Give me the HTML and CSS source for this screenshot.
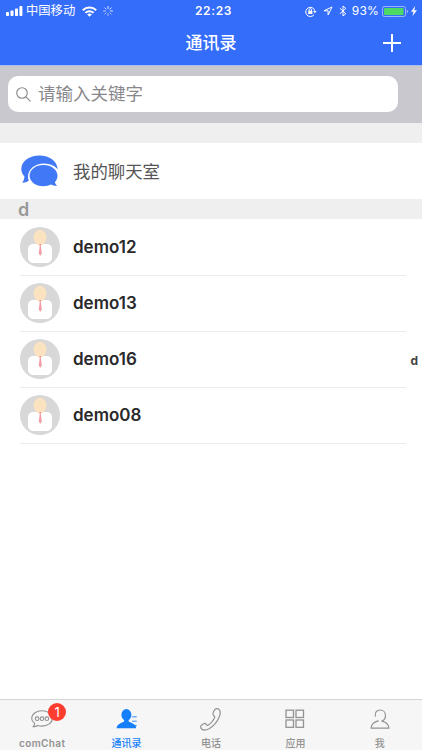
FILE: index.html
```
<!DOCTYPE html>
<html lang="zh-CN">
<head>
  <meta charset="UTF-8" />
  <meta name="viewport" content="width=device-width, initial-scale=1.0"/>
  <title>通讯录</title>
  <link rel="stylesheet" href="styles.css">
</head>
<body>
  <!-- Header -->
  <header>
    <div class="status-bar">
      <div class="status-left">
        <svg class="signal" width="17" height="10" viewBox="0 0 17 10" fill="#fff">
          <rect x="0" y="6" width="3" height="4" rx="0.8"/>
          <rect x="4.5" y="4.5" width="3" height="5.5" rx="0.8"/>
          <rect x="9" y="2.5" width="3" height="7.5" rx="0.8"/>
          <rect x="13.4" y="0" width="3" height="10" rx="0.8"/>
        </svg>
        <span class="carrier">中国移动</span>
        <svg class="wifi" width="15" height="11" viewBox="0 0 15 11" fill="none" stroke="#fff" stroke-width="2">
          <path d="M0.8 4.2a9.6 9.6 0 0 1 13.4 0M3.4 6.9a5.9 5.9 0 0 1 8.2 0"/>
          <path d="M7.5 10.8L5.2 8.6a3.4 3.4 0 0 1 4.6 0z" fill="#fff" stroke="none"/>
        </svg>
        <svg class="spinner" width="10" height="10" viewBox="0 0 10 10" stroke="#fff" stroke-width="0.9" stroke-linecap="round">
          <path d="M5 0.5v2M8.2 1.8L6.8 3.2M9.5 5h-2" opacity="0.95"/>
          <path d="M8.2 8.2L6.8 6.8M5 9.5v-2M1.8 8.2l1.4-1.4" opacity="0.6"/>
          <path d="M0.5 5h2M1.8 1.8l1.4 1.4" opacity="0.75"/>
        </svg>
      </div>
      <span class="time">22:23</span>
      <div class="status-right">
        <svg class="lock" width="12" height="11" viewBox="0 0 12 11" fill="none" stroke="#fff">
          <path d="M9 8.7A4.6 4.6 0 1 1 9.8 4.8"/>
          <path d="M8.1 4.9h3.5L9.9 7.2z" fill="#fff" stroke="none"/>
          <path d="M4.1 5V3.8a1.2 1.2 0 0 1 2.4 0V5"/>
          <rect x="3.2" y="4.8" width="4.2" height="3.2" fill="#fff" stroke="none"/>
        </svg>
        <svg class="location" width="10" height="10" viewBox="0 0 10 10" fill="none" stroke="#fff" stroke-linejoin="round">
          <path d="M9 1L0.9 4.8h4.2V9z"/>
        </svg>
        <svg class="bluetooth" width="8" height="12" viewBox="0 0 8 12" fill="none" stroke="#fff">
          <path d="M0.8 3.2l6 5.4L4 11V1l2.8 2.4-6 5.4"/>
        </svg>
        <span class="percent">93%</span>
        <svg class="battery" width="27" height="11" viewBox="0 0 27 11">
          <rect x="0.5" y="0.5" width="23" height="10" rx="1.8" fill="none" stroke="#b4c8ff" stroke-width="0.8"/>
          <rect x="2" y="2" width="19.5" height="7" rx="0.4" fill="#4cd964"/>
          <path d="M24.8 3.8c1.5 0.5 1.5 2.9 0 3.4z" fill="#b4c8ff"/>
        </svg>
        <svg class="bolt" width="6" height="10" viewBox="0 0 6 10" fill="#fff">
          <path d="M4.2 0L0 5.7h2.5L1.5 10 6 4.2H3.3z"/>
        </svg>
      </div>
    </div>
    <div class="nav-bar">
      <h1>通讯录</h1>
      <svg class="add" width="18" height="18" viewBox="0 0 18 18" stroke="#fff" stroke-width="2">
        <path d="M9 0v18M0 9h18"/>
      </svg>
    </div>
  </header>

  <!-- Search -->
  <div class="search-bar">
    <div class="search-field">
      <svg width="15" height="15" viewBox="0 0 15 15" fill="none" stroke="#88888c" stroke-width="1.1">
        <circle cx="6" cy="6" r="5.3"/>
        <path d="M9.8 9.8l4.7 4.6"/>
      </svg>
      <span>请输入关键字</span>
    </div>
  </div>

  <!-- Contacts -->
  <main>
    <div class="chat-room">
      <svg width="38" height="32" viewBox="0 0 38 32" fill="#4078f6">
        <path d="M18.5 0.5C28.5 0.5 36 6 36.7 14.2 33.5 10.5 29 8.4 23.2 8.4 14 8.4 7 14 7 21.5c0 1.5 0.3 3 0.8 4.2C6 27 3.6 27.8 1.3 27.7 2.6 26 3.4 23.8 3.4 21.6 1.4 19.3 0.3 16.6 0.3 13.7 0.3 6.3 8.5 0.5 18.5 0.5z"/>
        <path d="M22.4 10c8 0 14.1 4.8 14.1 10.7 0 2.4-1 4.6-2.6 6.4 0.2 1.4 1 2.8 2.2 3.8-2.2 0.1-4.4-0.5-6.2-1.4-2.2 1.1-4.8 1.7-7.5 1.7C14.5 31.2 8.6 26.5 8.6 20.7 8.6 14.8 14.5 10 22.4 10z"/>
      </svg>
      <span>我的聊天室</span>
    </div>
    <div class="section-title">d</div>
    <ul class="contacts">
      <li>
        <svg class="avatar" viewBox="0 0 40 40"><use href="#person"/></svg>
        <span>demo12</span>
      </li>
      <li>
        <svg class="avatar" viewBox="0 0 40 40"><use href="#person"/></svg>
        <span>demo13</span>
      </li>
      <li>
        <svg class="avatar" viewBox="0 0 40 40"><use href="#person"/></svg>
        <span>demo16</span>
      </li>
      <li>
        <svg class="avatar" viewBox="0 0 40 40"><use href="#person"/></svg>
        <span>demo08</span>
      </li>
    </ul>
  </main>

  <div class="letter-index">d</div>

  <!-- Tab Bar -->
  <footer>
    <div class="tab">
      <div class="icon">
        <svg width="22" height="18" viewBox="0 0 22 18" fill="none" stroke="#929292" stroke-width="1.1">
          <path d="M3.6 13.2C1.8 12 0.7 10.4 0.7 8.4 0.7 4.1 5.3 0.8 11 0.8s10.3 3.3 10.3 7.6-4.6 7.7-10.3 7.7c-1.5 0-2.9-0.2-4.1-0.6C5.5 16.3 3.8 16.7 2.3 16.6 3.2 15.7 3.7 14.5 3.6 13.2z"/>
          <circle cx="6.1" cy="8.7" r="1.8"/>
          <circle cx="11" cy="8.7" r="1.8"/>
          <circle cx="15.9" cy="8.7" r="1.8"/>
        </svg>
        <span class="badge">1</span>
      </div>
      <span class="latin">comChat</span>
    </div>
    <div class="tab active">
      <div class="icon">
        <svg width="22" height="20" viewBox="0 0 22 20" fill="#147efb">
          <ellipse cx="10.4" cy="5.9" rx="5" ry="5.8"/>
          <path d="M8.2 9h4.4v3.3c1.2 1.3 7 2.3 7.7 6.9H0.5c0.7-4.6 6.5-5.6 7.7-6.9z"/>
          <path d="M16.2 7.8h4.5M16.2 12.2h4.5M18.2 16.6h2.5" stroke="#147efb" stroke-width="0.9"/>
        </svg>
      </div>
      <span>通讯录</span>
    </div>
    <div class="tab">
      <div class="icon">
        <svg width="22" height="23" viewBox="0 0 22 23" fill="none" stroke="#929292" stroke-width="1.2" stroke-linejoin="round">
          <path d="M14.6 1.8C16 0.5 18 0.5 19.2 1.7c1.4 1.6 1.2 5-0.5 8.5-2 4-5.6 8.2-9.6 10.5-3.2 1.7-6 1.7-7.5 0.3-1.3-1.3-1.2-3.2 0.2-4.1l1.8-1.1c1-0.6 2-0.3 2.6 0.5l0.5 0.7c0.5 0.5 1.2 0.4 1.8 0 2.7-1.8 4.7-4.2 6-7 0.4-0.9 0.2-1.5-0.4-2-0.9-0.7-1.3-1.4-1.1-2.5C13.2 4.2 13.7 2.7 14.6 1.8z"/>
        </svg>
      </div>
      <span>电话</span>
    </div>
    <div class="tab">
      <div class="icon">
        <svg width="20" height="20" viewBox="0 0 20 20" fill="none" stroke="#929292" stroke-width="1.3">
          <rect x="1" y="1.2" width="7.5" height="7.3"/>
          <rect x="11" y="1.2" width="7.5" height="7.3"/>
          <rect x="1" y="11" width="7.5" height="7.3"/>
          <rect x="11" y="11" width="7.5" height="7.3"/>
        </svg>
      </div>
      <span>应用</span>
    </div>
    <div class="tab">
      <div class="icon">
        <svg width="20" height="21" viewBox="0 0 20 21" fill="none" stroke="#929292" stroke-width="1.2" stroke-linecap="round" stroke-linejoin="round">
          <path d="M5.3 7.2C4.6 3.5 7 1 10.2 1c3.1 0 5.3 2.4 5.3 5.5 0 2.6-1.5 4.8-3.7 5.6 4.2 0.8 6.7 3.3 7.2 7H1c0.5-3.7 3.2-6.3 7.3-7.2"/>
        </svg>
      </div>
      <span>我</span>
    </div>
  </footer>

  <!-- Shared avatar shape -->
  <svg class="defs" width="0" height="0">
    <symbol id="person" viewBox="0 0 40 40">
      <circle cx="20" cy="20" r="20" fill="#d8d8d8"/>
      <rect x="8" y="17" width="24" height="19" rx="5" fill="#fff"/>
      <ellipse cx="20" cy="10.5" rx="6.3" ry="7.8" fill="#fce3bf"/>
      <path d="M19 17h2.4l-0.6 2 1 7.500-1.500 2.300-1.500-2.300 0.900-7.500z" fill="#f29ba3"/>
    </symbol>
  </svg>
</body>
</html>
```
FILE: styles.css
```
/* Basic Reset */
* {
  margin: 0;
  padding: 0;
  box-sizing: border-box;
}

body {
  font-family: Inter, 'Noto Sans CJK SC', sans-serif;
  background: #fff;
  display: flex;
  flex-direction: column;
  height: 100vh;
  overflow: hidden;
  position: relative;
}

svg {
  display: block;
  flex-shrink: 0;
}

.defs {
  position: absolute;
}

/* Header */
header {
  height: 65px;
  background: #356dfb;
  color: #fff;
}

.status-bar {
  height: 22px;
  padding: 0 5px 0 6px;
  display: grid;
  grid-template-columns: 1fr auto 1fr;
  align-items: center;
  font-size: 12px;
  line-height: 22px;
}

.status-left,
.status-right {
  display: flex;
  align-items: center;
}

.status-right {
  justify-content: flex-end;
}

.carrier {
  margin-left: 3px;
  font-size: 12.3px;
}

.wifi {
  margin-left: 7px;
}

.spinner {
  margin-left: 6px;
}

.time {
  padding-left: 4px;
  font-size: 12px;
  font-weight: 600;
  letter-spacing: 0.6px;
}

.location {
  margin-left: 6px;
}

.bluetooth {
  margin-left: 6px;
}

.percent {
  margin-left: 5px;
  letter-spacing: 0.2px;
}

.battery {
  margin-left: 3px;
}

.bolt {
  margin-left: 2px;
}

.nav-bar {
  height: 43px;
  padding: 0 21px 1px;
  display: grid;
  grid-template-columns: 1fr auto 1fr;
  align-items: center;
}

.nav-bar h1 {
  grid-column: 2;
  font-size: 17px;
  font-weight: 500;
  line-height: 42px;
}

.add {
  justify-self: end;
}

/* Search */
.search-bar {
  height: 58px;
  padding: 10px 24px 0 8px;
  background: #c9c8ce;
  border-top: 1px solid #aebdef;
}

.search-field {
  height: 36px;
  padding-left: 8px;
  display: flex;
  align-items: center;
  gap: 7px;
  background: #fff;
  border-radius: 10px;
  color: #88888c;
  font-size: 17.5px;
  line-height: 36px;
}

/* Contacts */
main {
  flex: 1;
  border-top: 20px solid #efefef;
}

.chat-room {
  height: 56px;
  padding-left: 21px;
  display: flex;
  align-items: center;
  gap: 14px;
  color: #555;
  font-size: 17.4px;
}

.chat-room span {
  padding-bottom: 2px;
}

.section-title {
  height: 20px;
  padding-left: 18px;
  background: #efefef;
  color: #999;
  font-size: 18px;
  font-weight: 600;
  line-height: 21px;
}

.contacts {
  list-style: none;
  margin: 0 16px 0 20px;
}

.contacts li {
  height: 56px;
  display: flex;
  align-items: center;
  gap: 13px;
  box-shadow: 0 1px #ebebeb;
  color: #29292b;
  font-size: 17px;
  font-weight: 600;
}

.avatar {
  width: 40px;
  height: 40px;
}

/* Letter index over the list */
.letter-index {
  position: absolute;
  right: 4px;
  top: 353px;
  color: #444;
  font-size: 12px;
  font-weight: 700;
  line-height: 16px;
}

/* Tab Bar */
footer {
  height: 51px;
  display: grid;
  grid-template-columns: repeat(5, 1fr);
  background: #f6f6f6;
  border-top: 1px solid #d5d5d5;
}

.tab {
  display: flex;
  flex-direction: column;
  align-items: center;
  color: #929292;
  font-size: 10px;
  font-weight: 500;
  line-height: 14px;
}

.tab .latin {
  font-weight: 600;
  letter-spacing: 0.4px;
}

.tab.active {
  color: #147efb;
}

.icon {
  height: 36px;
  padding-top: 2px;
  display: flex;
  align-items: center;
  position: relative;
}

.badge {
  position: absolute;
  left: 17px;
  top: 3px;
  width: 18px;
  height: 18px;
  border-radius: 50%;
  background: #fc3d30;
  color: #fff;
  font-size: 13px;
  font-weight: 400;
  line-height: 18px;
  text-align: center;
}
```
